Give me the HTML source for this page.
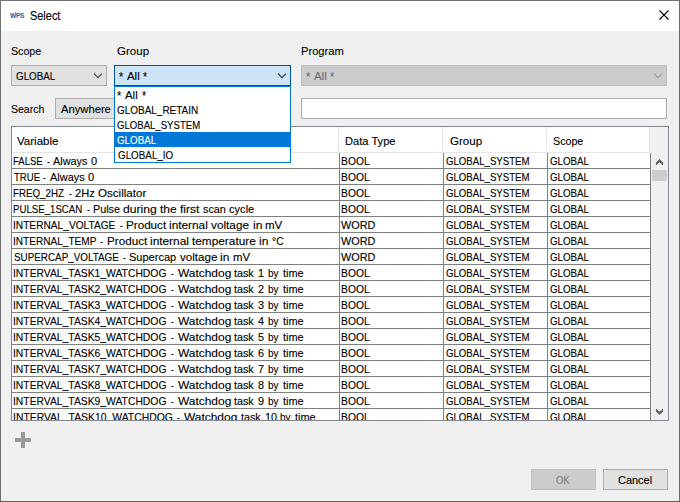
<!DOCTYPE html>
<html lang="en"><head><meta charset="utf-8"><title>Select</title>
<style>
html,body{margin:0;padding:0;}
body{width:680px;height:502px;overflow:hidden;background:#f0f0f0;font-family:"Liberation Sans",sans-serif;position:relative;}
.abs,.t{position:absolute;box-sizing:border-box;}
.t{white-space:pre;line-height:16px;height:16px;transform-origin:0 0;-webkit-font-smoothing:antialiased;-webkit-text-stroke:0.12px currentColor;}
#win{left:0;top:0;width:680px;height:502px;border:1px solid #717171;border-right-color:#6a6a6a;border-bottom-color:#606060;background:#f0f0f0;}
#title{left:1px;top:1px;width:678px;height:30px;background:#fff;}
.combo{background:#e1e1e1;border:1px solid #adadad;}
.combo.dis{background:#cccccc;border-color:#bfbfbf;}
.combo.act{background:#cce4f7;border-color:#005499;}
.btn{background:#e1e1e1;border:1px solid #adadad;}
.btn.dis{background:#cccccc;border-color:#bfbfbf;}
#grid{left:11px;top:126px;width:658px;height:295px;border:1px solid #828790;background:#fff;overflow:hidden;}
.hl{background:#808080;}
</style></head><body>
<div id="win" class="abs"></div>
<div id="title" class="abs"></div>

<span class="t" style="left:9.6px;top:7.5px;font-size:7px;font-weight:bold;color:#1b6db5;transform:scaleX(0.93);letter-spacing:-0.2px">WPS</span>
<div class="abs" style="left:15px;top:12px;width:1px;height:1px;background:#27c3ee"></div>
<svg class="abs" style="left:655px;top:6px" width="18" height="18" viewBox="0 0 18 18"><path d="M4.5 4.5 L13.5 13.5 M13.5 4.5 L4.5 13.5" stroke="#000" stroke-width="1.1" fill="none"/></svg>
<div class="abs combo" style="left:11px;top:65px;width:96px;height:21px"></div>
<svg class="abs" style="left:93px;top:73px" width="10" height="6" viewBox="0 0 10 6"><path d="M1 0.7 L5 4.7 L9 0.7" stroke="#444" stroke-width="1.1" fill="none"/></svg>
<div class="abs combo act" style="left:114px;top:65px;width:177px;height:21px"></div>
<svg class="abs" style="left:277px;top:73px" width="10" height="6" viewBox="0 0 10 6"><path d="M1 0.7 L5 4.7 L9 0.7" stroke="#333" stroke-width="1.1" fill="none"/></svg>
<div class="abs combo dis" style="left:301px;top:65px;width:366px;height:21px"></div>
<svg class="abs" style="left:653px;top:73px" width="10" height="6" viewBox="0 0 10 6"><path d="M1 0.7 L5 4.7 L9 0.7" stroke="#9a9a9a" stroke-width="1.1" fill="none"/></svg>
<div class="abs combo" style="left:55px;top:98px;width:236px;height:21px"></div>
<div class="abs" style="left:301px;top:98px;width:366px;height:21px;background:#fff;border:1px solid #abadb3"></div>
<div id="grid" class="abs"></div>
<div class="abs" style="left:12px;top:152px;width:638px;height:1px;background:#e5e5e5"></div>
<div class="abs" style="left:338px;top:127px;width:1px;height:26px;background:#e5e5e5"></div>
<div class="abs" style="left:442px;top:127px;width:1px;height:26px;background:#e5e5e5"></div>
<div class="abs" style="left:546px;top:127px;width:1px;height:26px;background:#e5e5e5"></div>
<div class="abs" style="left:650px;top:127px;width:18px;height:293px;background:#f0f0f0"></div>
<div class="abs" style="left:649px;top:127px;width:1px;height:26px;background:#e5e5e5"></div>
<div class="abs hl" style="left:12px;top:168px;width:639px;height:1px"></div>
<div class="abs hl" style="left:12px;top:184px;width:639px;height:1px"></div>
<div class="abs hl" style="left:12px;top:200px;width:639px;height:1px"></div>
<div class="abs hl" style="left:12px;top:216px;width:639px;height:1px"></div>
<div class="abs hl" style="left:12px;top:232px;width:639px;height:1px"></div>
<div class="abs hl" style="left:12px;top:248px;width:639px;height:1px"></div>
<div class="abs hl" style="left:12px;top:264px;width:639px;height:1px"></div>
<div class="abs hl" style="left:12px;top:280px;width:639px;height:1px"></div>
<div class="abs hl" style="left:12px;top:296px;width:639px;height:1px"></div>
<div class="abs hl" style="left:12px;top:312px;width:639px;height:1px"></div>
<div class="abs hl" style="left:12px;top:328px;width:639px;height:1px"></div>
<div class="abs hl" style="left:12px;top:344px;width:639px;height:1px"></div>
<div class="abs hl" style="left:12px;top:360px;width:639px;height:1px"></div>
<div class="abs hl" style="left:12px;top:376px;width:639px;height:1px"></div>
<div class="abs hl" style="left:12px;top:392px;width:639px;height:1px"></div>
<div class="abs hl" style="left:12px;top:408px;width:639px;height:1px"></div>
<div class="abs hl" style="left:339px;top:153px;width:1px;height:267px"></div>
<div class="abs hl" style="left:443px;top:153px;width:1px;height:267px"></div>
<div class="abs hl" style="left:547px;top:153px;width:1px;height:267px"></div>
<div class="abs hl" style="left:650px;top:153px;width:1px;height:267px"></div>
<svg class="abs" style="left:655px;top:158px" width="10" height="8" viewBox="0 0 10 8"><path d="M4.5 0.9 L8.1 4.5 L8.1 6.9 L7.4 6.9 L4.5 4.2 L1.6 6.9 L0.9 6.9 L0.9 4.5 Z" fill="#606060"/></svg>
<svg class="abs" style="left:655px;top:408px" width="10" height="8" viewBox="0 0 10 8"><path d="M4.5 7.1 L8.1 3.5 L8.1 1.1 L7.4 1.1 L4.5 3.8 L1.6 1.1 L0.9 1.1 L0.9 3.5 Z" fill="#606060"/></svg>
<div class="abs" style="left:652px;top:170px;width:15px;height:11px;background:#cdcdcd"></div>
<div class="abs" style="left:0;top:153px;width:650px;height:267px;overflow:hidden">
<span class="t" style="left:13.27px;top:0.19px;font-size:11px;color:#000;transform:scaleX(0.8651);">FALSE</span>
<span class="t" style="left:46.82px;top:0.19px;font-size:11px;color:#000;transform:scaleX(0.7690);">-</span>
<span class="t" style="left:53.28px;top:0.19px;font-size:11px;color:#000;transform:scaleX(0.9889);">Always</span>
<span class="t" style="left:90.86px;top:0.19px;font-size:11px;color:#000;transform:scaleX(1.0042);">0</span>
<span class="t" style="left:341.05px;top:0.19px;font-size:11px;color:#000;transform:scaleX(0.9375);">BOOL</span>
<span class="t" style="left:445.62px;top:0.19px;font-size:11px;color:#000;transform:scaleX(0.8758);">GLOBAL_SYSTEM</span>
<span class="t" style="left:549.61px;top:0.19px;font-size:11px;color:#000;transform:scaleX(0.8858);">GLOBAL</span>
<span class="t" style="left:13.58px;top:16.19px;font-size:11px;color:#000;transform:scaleX(0.8719);">TRUE</span>
<span class="t" style="left:43.42px;top:16.19px;font-size:11px;color:#000;transform:scaleX(0.7690);">-</span>
<span class="t" style="left:50.23px;top:16.19px;font-size:11px;color:#000;transform:scaleX(0.9946);">Always</span>
<span class="t" style="left:88.02px;top:16.19px;font-size:11px;color:#000;transform:scaleX(1.0099);">0</span>
<span class="t" style="left:341.05px;top:16.19px;font-size:11px;color:#000;transform:scaleX(0.9375);">BOOL</span>
<span class="t" style="left:445.62px;top:16.19px;font-size:11px;color:#000;transform:scaleX(0.8758);">GLOBAL_SYSTEM</span>
<span class="t" style="left:549.61px;top:16.19px;font-size:11px;color:#000;transform:scaleX(0.8858);">GLOBAL</span>
<span class="t" style="left:13.25px;top:32.19px;font-size:11px;color:#000;transform:scaleX(0.8877);">FREQ_2HZ</span>
<span class="t" style="left:68.62px;top:32.19px;font-size:11px;color:#000;transform:scaleX(0.7690);">-</span>
<span class="t" style="left:74.85px;top:32.19px;font-size:11px;color:#000;transform:scaleX(1.0121);">2Hz</span>
<span class="t" style="left:97.83px;top:32.19px;font-size:11px;color:#000;transform:scaleX(1.0529);">Oscillator</span>
<span class="t" style="left:341.05px;top:32.19px;font-size:11px;color:#000;transform:scaleX(0.9375);">BOOL</span>
<span class="t" style="left:445.62px;top:32.19px;font-size:11px;color:#000;transform:scaleX(0.8758);">GLOBAL_SYSTEM</span>
<span class="t" style="left:549.61px;top:32.19px;font-size:11px;color:#000;transform:scaleX(0.8858);">GLOBAL</span>
<span class="t" style="left:13.26px;top:48.19px;font-size:11px;color:#000;transform:scaleX(0.8773);">PULSE_1SCAN</span>
<span class="t" style="left:87.22px;top:48.19px;font-size:11px;color:#000;transform:scaleX(0.7690);">-</span>
<span class="t" style="left:93.20px;top:48.19px;font-size:11px;color:#000;transform:scaleX(0.9802);">Pulse</span>
<span class="t" style="left:123.36px;top:48.19px;font-size:11px;color:#000;transform:scaleX(1.1042);">during</span>
<span class="t" style="left:160.31px;top:48.19px;font-size:11px;color:#000;transform:scaleX(1.0873);">the</span>
<span class="t" style="left:180.12px;top:48.19px;font-size:11px;color:#000;transform:scaleX(1.0945);">first</span>
<span class="t" style="left:202.71px;top:48.19px;font-size:11px;color:#000;transform:scaleX(0.9827);">scan</span>
<span class="t" style="left:228.73px;top:48.19px;font-size:11px;color:#000;transform:scaleX(1.0084);">cycle</span>
<span class="t" style="left:341.05px;top:48.19px;font-size:11px;color:#000;transform:scaleX(0.9375);">BOOL</span>
<span class="t" style="left:445.62px;top:48.19px;font-size:11px;color:#000;transform:scaleX(0.8758);">GLOBAL_SYSTEM</span>
<span class="t" style="left:549.61px;top:48.19px;font-size:11px;color:#000;transform:scaleX(0.8858);">GLOBAL</span>
<span class="t" style="left:13.11px;top:64.19px;font-size:11px;color:#000;transform:scaleX(0.9238);">INTERNAL_VOLTAGE</span>
<span class="t" style="left:119.52px;top:64.19px;font-size:11px;color:#000;transform:scaleX(0.7690);">-</span>
<span class="t" style="left:126.10px;top:64.19px;font-size:11px;color:#000;transform:scaleX(1.0598);">Product</span>
<span class="t" style="left:169.46px;top:64.19px;font-size:11px;color:#000;transform:scaleX(1.0761);">internal</span>
<span class="t" style="left:211.47px;top:64.19px;font-size:11px;color:#000;transform:scaleX(1.0722);">voltage</span>
<span class="t" style="left:252.69px;top:64.19px;font-size:11px;color:#000;transform:scaleX(1.0993);">in</span>
<span class="t" style="left:265.29px;top:64.19px;font-size:11px;color:#000;transform:scaleX(1.0488);">mV</span>
<span class="t" style="left:341.25px;top:64.19px;font-size:11px;color:#000;transform:scaleX(0.9847);">WORD</span>
<span class="t" style="left:445.62px;top:64.19px;font-size:11px;color:#000;transform:scaleX(0.8758);">GLOBAL_SYSTEM</span>
<span class="t" style="left:549.61px;top:64.19px;font-size:11px;color:#000;transform:scaleX(0.8858);">GLOBAL</span>
<span class="t" style="left:13.12px;top:80.19px;font-size:11px;color:#000;transform:scaleX(0.9156);">INTERNAL_TEMP</span>
<span class="t" style="left:100.12px;top:80.19px;font-size:11px;color:#000;transform:scaleX(0.7690);">-</span>
<span class="t" style="left:106.50px;top:80.19px;font-size:11px;color:#000;transform:scaleX(1.0616);">Product</span>
<span class="t" style="left:149.94px;top:80.19px;font-size:11px;color:#000;transform:scaleX(1.0779);">internal</span>
<span class="t" style="left:192.02px;top:80.19px;font-size:11px;color:#000;transform:scaleX(1.0749);">temperature</span>
<span class="t" style="left:258.96px;top:80.19px;font-size:11px;color:#000;transform:scaleX(1.1012);">in</span>
<span class="t" style="left:271.59px;top:80.19px;font-size:11px;color:#000;transform:scaleX(0.9409);">°C</span>
<span class="t" style="left:341.25px;top:80.19px;font-size:11px;color:#000;transform:scaleX(0.9847);">WORD</span>
<span class="t" style="left:445.62px;top:80.19px;font-size:11px;color:#000;transform:scaleX(0.8758);">GLOBAL_SYSTEM</span>
<span class="t" style="left:549.61px;top:80.19px;font-size:11px;color:#000;transform:scaleX(0.8858);">GLOBAL</span>
<span class="t" style="left:13.60px;top:96.19px;font-size:11px;color:#000;transform:scaleX(0.8960);">SUPERCAP_VOLTAGE</span>
<span class="t" style="left:122.72px;top:96.19px;font-size:11px;color:#000;transform:scaleX(0.7690);">-</span>
<span class="t" style="left:129.20px;top:96.19px;font-size:11px;color:#000;transform:scaleX(1.0020);">Supercap</span>
<span class="t" style="left:179.52px;top:96.19px;font-size:11px;color:#000;transform:scaleX(1.0564);">voltage</span>
<span class="t" style="left:220.14px;top:96.19px;font-size:11px;color:#000;transform:scaleX(1.0831);">in</span>
<span class="t" style="left:232.55px;top:96.19px;font-size:11px;color:#000;transform:scaleX(1.0334);">mV</span>
<span class="t" style="left:341.25px;top:96.19px;font-size:11px;color:#000;transform:scaleX(0.9847);">WORD</span>
<span class="t" style="left:445.62px;top:96.19px;font-size:11px;color:#000;transform:scaleX(0.8758);">GLOBAL_SYSTEM</span>
<span class="t" style="left:549.61px;top:96.19px;font-size:11px;color:#000;transform:scaleX(0.8858);">GLOBAL</span>
<span class="t" style="left:13.10px;top:112.19px;font-size:11px;color:#000;transform:scaleX(0.9401);">INTERVAL_TASK1_WATCHDOG</span>
<span class="t" style="left:170.92px;top:112.19px;font-size:11px;color:#000;transform:scaleX(0.7690);">-</span>
<span class="t" style="left:177.85px;top:112.19px;font-size:11px;color:#000;transform:scaleX(1.0847);">Watchdog</span>
<span class="t" style="left:234.24px;top:112.19px;font-size:11px;color:#000;transform:scaleX(0.9753);">task</span>
<span class="t" style="left:258.20px;top:112.19px;font-size:11px;color:#000;transform:scaleX(0.9887);">1</span>
<span class="t" style="left:267.56px;top:112.19px;font-size:11px;color:#000;transform:scaleX(0.9028);">by</span>
<span class="t" style="left:282.74px;top:112.19px;font-size:11px;color:#000;transform:scaleX(0.9904);">time</span>
<span class="t" style="left:341.05px;top:112.19px;font-size:11px;color:#000;transform:scaleX(0.9375);">BOOL</span>
<span class="t" style="left:445.62px;top:112.19px;font-size:11px;color:#000;transform:scaleX(0.8758);">GLOBAL_SYSTEM</span>
<span class="t" style="left:549.61px;top:112.19px;font-size:11px;color:#000;transform:scaleX(0.8858);">GLOBAL</span>
<span class="t" style="left:13.10px;top:128.19px;font-size:11px;color:#000;transform:scaleX(0.9401);">INTERVAL_TASK2_WATCHDOG</span>
<span class="t" style="left:170.92px;top:128.19px;font-size:11px;color:#000;transform:scaleX(0.7690);">-</span>
<span class="t" style="left:177.85px;top:128.19px;font-size:11px;color:#000;transform:scaleX(1.0847);">Watchdog</span>
<span class="t" style="left:234.24px;top:128.19px;font-size:11px;color:#000;transform:scaleX(0.9753);">task</span>
<span class="t" style="left:258.20px;top:128.19px;font-size:11px;color:#000;transform:scaleX(0.9887);">2</span>
<span class="t" style="left:267.56px;top:128.19px;font-size:11px;color:#000;transform:scaleX(0.9028);">by</span>
<span class="t" style="left:282.74px;top:128.19px;font-size:11px;color:#000;transform:scaleX(0.9904);">time</span>
<span class="t" style="left:341.05px;top:128.19px;font-size:11px;color:#000;transform:scaleX(0.9375);">BOOL</span>
<span class="t" style="left:445.62px;top:128.19px;font-size:11px;color:#000;transform:scaleX(0.8758);">GLOBAL_SYSTEM</span>
<span class="t" style="left:549.61px;top:128.19px;font-size:11px;color:#000;transform:scaleX(0.8858);">GLOBAL</span>
<span class="t" style="left:13.10px;top:144.19px;font-size:11px;color:#000;transform:scaleX(0.9401);">INTERVAL_TASK3_WATCHDOG</span>
<span class="t" style="left:170.92px;top:144.19px;font-size:11px;color:#000;transform:scaleX(0.7690);">-</span>
<span class="t" style="left:177.85px;top:144.19px;font-size:11px;color:#000;transform:scaleX(1.0847);">Watchdog</span>
<span class="t" style="left:234.24px;top:144.19px;font-size:11px;color:#000;transform:scaleX(0.9753);">task</span>
<span class="t" style="left:258.20px;top:144.19px;font-size:11px;color:#000;transform:scaleX(0.9887);">3</span>
<span class="t" style="left:267.56px;top:144.19px;font-size:11px;color:#000;transform:scaleX(0.9028);">by</span>
<span class="t" style="left:282.74px;top:144.19px;font-size:11px;color:#000;transform:scaleX(0.9904);">time</span>
<span class="t" style="left:341.05px;top:144.19px;font-size:11px;color:#000;transform:scaleX(0.9375);">BOOL</span>
<span class="t" style="left:445.62px;top:144.19px;font-size:11px;color:#000;transform:scaleX(0.8758);">GLOBAL_SYSTEM</span>
<span class="t" style="left:549.61px;top:144.19px;font-size:11px;color:#000;transform:scaleX(0.8858);">GLOBAL</span>
<span class="t" style="left:13.10px;top:160.19px;font-size:11px;color:#000;transform:scaleX(0.9401);">INTERVAL_TASK4_WATCHDOG</span>
<span class="t" style="left:170.92px;top:160.19px;font-size:11px;color:#000;transform:scaleX(0.7690);">-</span>
<span class="t" style="left:177.85px;top:160.19px;font-size:11px;color:#000;transform:scaleX(1.0847);">Watchdog</span>
<span class="t" style="left:234.24px;top:160.19px;font-size:11px;color:#000;transform:scaleX(0.9753);">task</span>
<span class="t" style="left:258.20px;top:160.19px;font-size:11px;color:#000;transform:scaleX(0.9887);">4</span>
<span class="t" style="left:267.56px;top:160.19px;font-size:11px;color:#000;transform:scaleX(0.9028);">by</span>
<span class="t" style="left:282.74px;top:160.19px;font-size:11px;color:#000;transform:scaleX(0.9904);">time</span>
<span class="t" style="left:341.05px;top:160.19px;font-size:11px;color:#000;transform:scaleX(0.9375);">BOOL</span>
<span class="t" style="left:445.62px;top:160.19px;font-size:11px;color:#000;transform:scaleX(0.8758);">GLOBAL_SYSTEM</span>
<span class="t" style="left:549.61px;top:160.19px;font-size:11px;color:#000;transform:scaleX(0.8858);">GLOBAL</span>
<span class="t" style="left:13.10px;top:176.19px;font-size:11px;color:#000;transform:scaleX(0.9401);">INTERVAL_TASK5_WATCHDOG</span>
<span class="t" style="left:170.92px;top:176.19px;font-size:11px;color:#000;transform:scaleX(0.7690);">-</span>
<span class="t" style="left:177.85px;top:176.19px;font-size:11px;color:#000;transform:scaleX(1.0847);">Watchdog</span>
<span class="t" style="left:234.24px;top:176.19px;font-size:11px;color:#000;transform:scaleX(0.9753);">task</span>
<span class="t" style="left:258.20px;top:176.19px;font-size:11px;color:#000;transform:scaleX(0.9887);">5</span>
<span class="t" style="left:267.56px;top:176.19px;font-size:11px;color:#000;transform:scaleX(0.9028);">by</span>
<span class="t" style="left:282.74px;top:176.19px;font-size:11px;color:#000;transform:scaleX(0.9904);">time</span>
<span class="t" style="left:341.05px;top:176.19px;font-size:11px;color:#000;transform:scaleX(0.9375);">BOOL</span>
<span class="t" style="left:445.62px;top:176.19px;font-size:11px;color:#000;transform:scaleX(0.8758);">GLOBAL_SYSTEM</span>
<span class="t" style="left:549.61px;top:176.19px;font-size:11px;color:#000;transform:scaleX(0.8858);">GLOBAL</span>
<span class="t" style="left:13.10px;top:192.19px;font-size:11px;color:#000;transform:scaleX(0.9401);">INTERVAL_TASK6_WATCHDOG</span>
<span class="t" style="left:170.92px;top:192.19px;font-size:11px;color:#000;transform:scaleX(0.7690);">-</span>
<span class="t" style="left:177.85px;top:192.19px;font-size:11px;color:#000;transform:scaleX(1.0847);">Watchdog</span>
<span class="t" style="left:234.24px;top:192.19px;font-size:11px;color:#000;transform:scaleX(0.9753);">task</span>
<span class="t" style="left:258.20px;top:192.19px;font-size:11px;color:#000;transform:scaleX(0.9887);">6</span>
<span class="t" style="left:267.56px;top:192.19px;font-size:11px;color:#000;transform:scaleX(0.9028);">by</span>
<span class="t" style="left:282.74px;top:192.19px;font-size:11px;color:#000;transform:scaleX(0.9904);">time</span>
<span class="t" style="left:341.05px;top:192.19px;font-size:11px;color:#000;transform:scaleX(0.9375);">BOOL</span>
<span class="t" style="left:445.62px;top:192.19px;font-size:11px;color:#000;transform:scaleX(0.8758);">GLOBAL_SYSTEM</span>
<span class="t" style="left:549.61px;top:192.19px;font-size:11px;color:#000;transform:scaleX(0.8858);">GLOBAL</span>
<span class="t" style="left:13.10px;top:208.19px;font-size:11px;color:#000;transform:scaleX(0.9401);">INTERVAL_TASK7_WATCHDOG</span>
<span class="t" style="left:170.92px;top:208.19px;font-size:11px;color:#000;transform:scaleX(0.7690);">-</span>
<span class="t" style="left:177.85px;top:208.19px;font-size:11px;color:#000;transform:scaleX(1.0847);">Watchdog</span>
<span class="t" style="left:234.24px;top:208.19px;font-size:11px;color:#000;transform:scaleX(0.9753);">task</span>
<span class="t" style="left:258.20px;top:208.19px;font-size:11px;color:#000;transform:scaleX(0.9887);">7</span>
<span class="t" style="left:267.56px;top:208.19px;font-size:11px;color:#000;transform:scaleX(0.9028);">by</span>
<span class="t" style="left:282.74px;top:208.19px;font-size:11px;color:#000;transform:scaleX(0.9904);">time</span>
<span class="t" style="left:341.05px;top:208.19px;font-size:11px;color:#000;transform:scaleX(0.9375);">BOOL</span>
<span class="t" style="left:445.62px;top:208.19px;font-size:11px;color:#000;transform:scaleX(0.8758);">GLOBAL_SYSTEM</span>
<span class="t" style="left:549.61px;top:208.19px;font-size:11px;color:#000;transform:scaleX(0.8858);">GLOBAL</span>
<span class="t" style="left:13.10px;top:224.19px;font-size:11px;color:#000;transform:scaleX(0.9401);">INTERVAL_TASK8_WATCHDOG</span>
<span class="t" style="left:170.92px;top:224.19px;font-size:11px;color:#000;transform:scaleX(0.7690);">-</span>
<span class="t" style="left:177.85px;top:224.19px;font-size:11px;color:#000;transform:scaleX(1.0847);">Watchdog</span>
<span class="t" style="left:234.24px;top:224.19px;font-size:11px;color:#000;transform:scaleX(0.9753);">task</span>
<span class="t" style="left:258.20px;top:224.19px;font-size:11px;color:#000;transform:scaleX(0.9887);">8</span>
<span class="t" style="left:267.56px;top:224.19px;font-size:11px;color:#000;transform:scaleX(0.9028);">by</span>
<span class="t" style="left:282.74px;top:224.19px;font-size:11px;color:#000;transform:scaleX(0.9904);">time</span>
<span class="t" style="left:341.05px;top:224.19px;font-size:11px;color:#000;transform:scaleX(0.9375);">BOOL</span>
<span class="t" style="left:445.62px;top:224.19px;font-size:11px;color:#000;transform:scaleX(0.8758);">GLOBAL_SYSTEM</span>
<span class="t" style="left:549.61px;top:224.19px;font-size:11px;color:#000;transform:scaleX(0.8858);">GLOBAL</span>
<span class="t" style="left:13.10px;top:240.19px;font-size:11px;color:#000;transform:scaleX(0.9401);">INTERVAL_TASK9_WATCHDOG</span>
<span class="t" style="left:170.92px;top:240.19px;font-size:11px;color:#000;transform:scaleX(0.7690);">-</span>
<span class="t" style="left:177.85px;top:240.19px;font-size:11px;color:#000;transform:scaleX(1.0847);">Watchdog</span>
<span class="t" style="left:234.24px;top:240.19px;font-size:11px;color:#000;transform:scaleX(0.9753);">task</span>
<span class="t" style="left:258.20px;top:240.19px;font-size:11px;color:#000;transform:scaleX(0.9887);">9</span>
<span class="t" style="left:267.56px;top:240.19px;font-size:11px;color:#000;transform:scaleX(0.9028);">by</span>
<span class="t" style="left:282.74px;top:240.19px;font-size:11px;color:#000;transform:scaleX(0.9904);">time</span>
<span class="t" style="left:341.05px;top:240.19px;font-size:11px;color:#000;transform:scaleX(0.9375);">BOOL</span>
<span class="t" style="left:445.62px;top:240.19px;font-size:11px;color:#000;transform:scaleX(0.8758);">GLOBAL_SYSTEM</span>
<span class="t" style="left:549.61px;top:240.19px;font-size:11px;color:#000;transform:scaleX(0.8858);">GLOBAL</span>
<span class="t" style="left:13.09px;top:256.19px;font-size:11px;color:#000;transform:scaleX(0.9440);">INTERVAL_TASK10_WATCHDOG</span>
<span class="t" style="left:177.32px;top:256.19px;font-size:11px;color:#000;transform:scaleX(0.7690);">-</span>
<span class="t" style="left:184.25px;top:256.19px;font-size:11px;color:#000;transform:scaleX(1.0847);">Watchdog</span>
<span class="t" style="left:240.64px;top:256.19px;font-size:11px;color:#000;transform:scaleX(0.9753);">task</span>
<span class="t" style="left:264.60px;top:256.19px;font-size:11px;color:#000;transform:scaleX(0.9887);">10</span>
<span class="t" style="left:279.96px;top:256.19px;font-size:11px;color:#000;transform:scaleX(0.9028);">by</span>
<span class="t" style="left:295.14px;top:256.19px;font-size:11px;color:#000;transform:scaleX(0.9904);">time</span>
<span class="t" style="left:341.05px;top:256.19px;font-size:11px;color:#000;transform:scaleX(0.9375);">BOOL</span>
<span class="t" style="left:445.62px;top:256.19px;font-size:11px;color:#000;transform:scaleX(0.8758);">GLOBAL_SYSTEM</span>
<span class="t" style="left:549.61px;top:256.19px;font-size:11px;color:#000;transform:scaleX(0.8858);">GLOBAL</span>
</div>
<div class="abs" style="left:114px;top:86px;width:177px;height:77px;background:#fff;border:1px solid #0078d7"></div>
<div class="abs" style="left:115px;top:132px;width:175px;height:15px;background:#0078d7"></div>
<div class="abs" style="left:15px;top:438px;width:16px;height:4px;background:#999"></div>
<div class="abs" style="left:21px;top:432px;width:4px;height:16px;background:#999"></div>
<div class="abs btn dis" style="left:531px;top:469px;width:65px;height:21px"></div>
<div class="abs btn" style="left:603px;top:469px;width:65px;height:21px"></div>
<span class="t" style="left:30.00px;top:7.84px;font-size:12px;color:#000;transform:scaleX(0.9112);">Select</span>
<span class="t" style="left:11.42px;top:43.19px;font-size:11px;color:#000;transform:scaleX(0.9682);">Scope</span>
<span class="t" style="left:117.02px;top:43.19px;font-size:11px;color:#000;transform:scaleX(1.0501);">Group</span>
<span class="t" style="left:300.99px;top:43.19px;font-size:11px;color:#000;transform:scaleX(1.0118);">Program</span>
<span class="t" style="left:16.41px;top:68.19px;font-size:11px;color:#000;transform:scaleX(0.8927);">GLOBAL</span>
<span class="t" style="left:119.12px;top:68.57px;font-size:12.5px;color:#000;transform:scaleX(0.8753);">*</span>
<span class="t" style="left:127.28px;top:68.19px;font-size:11px;color:#000;transform:scaleX(1.0375);">All</span>
<span class="t" style="left:143.43px;top:68.57px;font-size:12.5px;color:#000;transform:scaleX(0.8544);">*</span>
<span class="t" style="left:306.12px;top:68.57px;font-size:12.5px;color:#6d6d6d;transform:scaleX(0.8753);">*</span>
<span class="t" style="left:314.28px;top:68.19px;font-size:11px;color:#6d6d6d;transform:scaleX(1.0375);">All</span>
<span class="t" style="left:330.43px;top:68.57px;font-size:12.5px;color:#6d6d6d;transform:scaleX(0.8544);">*</span>
<span class="t" style="left:117.32px;top:87.57px;font-size:12.5px;color:#000;transform:scaleX(0.8753);">*</span>
<span class="t" style="left:125.48px;top:87.19px;font-size:11px;color:#000;transform:scaleX(1.0375);">All</span>
<span class="t" style="left:141.63px;top:87.57px;font-size:12.5px;color:#000;transform:scaleX(0.8544);">*</span>
<span class="t" style="left:117.40px;top:102.19px;font-size:11px;color:#000;transform:scaleX(0.9051);">GLOBAL_RETAIN</span>
<span class="t" style="left:117.42px;top:117.19px;font-size:11px;color:#000;transform:scaleX(0.8716);">GLOBAL_SYSTEM</span>
<span class="t" style="left:117.41px;top:132.19px;font-size:11px;color:#fff;transform:scaleX(0.8881);">GLOBAL</span>
<span class="t" style="left:117.61px;top:147.19px;font-size:11px;color:#000;transform:scaleX(0.8939);">GLOBAL_IO</span>
<span class="t" style="left:11.42px;top:101.19px;font-size:11px;color:#000;transform:scaleX(0.9551);">Search</span>
<span class="t" style="left:60.88px;top:101.19px;font-size:11px;color:#000;transform:scaleX(1.0190);">Anywhere</span>
<span class="t" style="left:17.15px;top:133.19px;font-size:11px;color:#000;transform:scaleX(1.0489);">Variable</span>
<span class="t" style="left:344.99px;top:133.19px;font-size:11px;color:#000;transform:scaleX(1.0118);">Data Type</span>
<span class="t" style="left:449.52px;top:133.19px;font-size:11px;color:#000;transform:scaleX(1.0501);">Group</span>
<span class="t" style="left:553.31px;top:133.19px;font-size:11px;color:#000;transform:scaleX(0.9715);">Scope</span>
<span class="t" style="left:556.35px;top:472.19px;font-size:11px;color:#838383;transform:scaleX(0.8606);">OK</span>
<span class="t" style="left:618.14px;top:472.19px;font-size:11px;color:#000;transform:scaleX(0.9958);">Cancel</span>
</body></html>
